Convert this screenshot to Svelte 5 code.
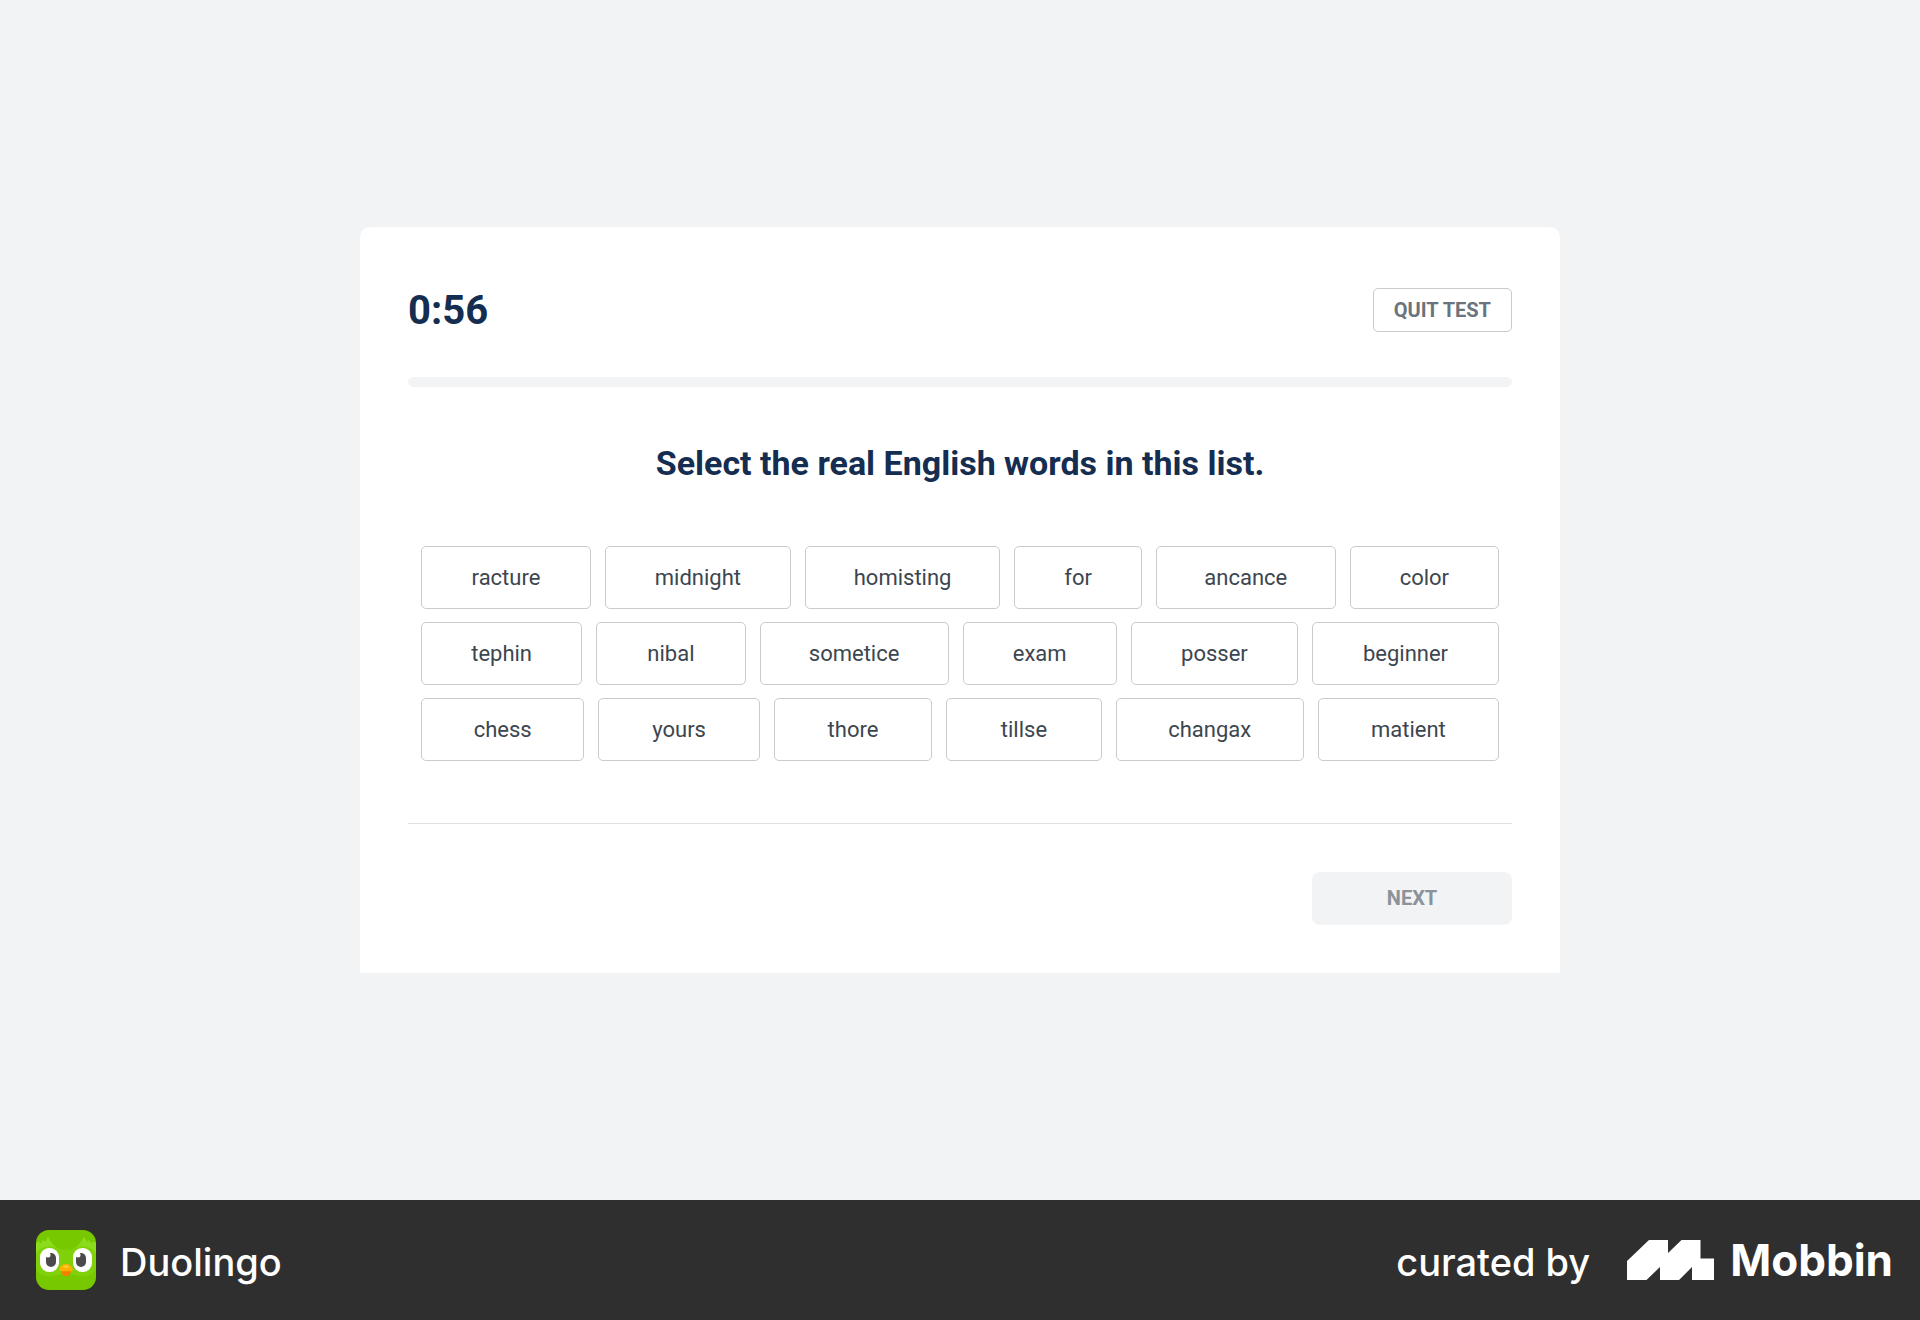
<script>
  // `size` is each tile's share of its row.
  const rows = [
    [
      { word: 'racture', size: 170 },
      { word: 'midnight', size: 186 },
      { word: 'homisting', size: 196 },
      { word: 'for', size: 127 },
      { word: 'ancance', size: 180 },
      { word: 'color', size: 149 }
    ],
    [
      { word: 'tephin', size: 161 },
      { word: 'nibal', size: 149 },
      { word: 'sometice', size: 189 },
      { word: 'exam', size: 154 },
      { word: 'posser', size: 167 },
      { word: 'beginner', size: 187 }
    ],
    [
      { word: 'chess', size: 163 },
      { word: 'yours', size: 161 },
      { word: 'thore', size: 158 },
      { word: 'tillse', size: 155 },
      { word: 'changax', size: 188 },
      { word: 'matient', size: 181 }
    ]
  ];

  let selected = $state([]);

  function toggle(word) {
    selected = selected.includes(word)
      ? selected.filter((w) => w !== word)
      : [...selected, word];
  }
</script>

<div class="page">
  <main>
    <section class="card">
      <header>
        <div class="timer" role="timer">0:56</div>
        <button class="quit" type="button">QUIT TEST</button>
      </header>
      <div class="track"></div>
      <h1>Select the real English words in this list.</h1>
      <div class="words">
        {#each rows as row}
          <div class="row">
            {#each row as item}
              <button
                type="button"
                class="word"
                class:on={selected.includes(item.word)}
                aria-pressed={selected.includes(item.word)}
                style:flex-grow={item.size}
                onclick={() => toggle(item.word)}>{item.word}</button>
            {/each}
          </div>
        {/each}
      </div>
      <div class="actions">
        <button class="next" type="button" disabled={selected.length === 0}>NEXT</button>
      </div>
    </section>
  </main>

  <footer>
    <div class="app">
      <svg class="owl" viewBox="0 0 60 60" aria-hidden="true">
        <defs>
          <clipPath id="tile"><rect width="60" height="60" rx="13" /></clipPath>
        </defs>
        <g clip-path="url(#tile)">
          <rect width="60" height="60" fill="#78c800" />
          <path d="M0 13 L3 11 L4 14 L7 10 L9 12 L12 7 C16 13 20 20 30 20 C40 20 43 13 48 7 L51 12 L53 10 L56 14 L57 11 L60 13 V38 C57 46 50 47 43 46 C38 45 35 44 30 44 C25 44 22 45 17 46 C10 47 3 46 0 38 Z" fill="#80d10a" />
          <path d="M0 13 L3 11 L4 14 L7 10 L9 12 L12 7 C15 12 17 16 21 18 C12 15 4 17 0 23 Z M60 13 L57 11 L56 14 L53 10 L51 12 L48 7 C45 12 43 16 39 18 C48 15 56 17 60 23 Z" fill="#8bdc1c" />
          <rect x="4" y="18" width="19" height="24" rx="9" fill="#fff" />
          <rect x="37" y="18" width="19" height="24" rx="9" fill="#fff" />
          <rect x="10" y="23" width="10" height="14" rx="5" fill="#4b4b4b" />
          <rect x="40" y="23" width="10" height="14" rx="5" fill="#4b4b4b" />
          <circle cx="12" cy="25" r="2.5" fill="#fff" />
          <circle cx="42" cy="25" r="2.5" fill="#fff" />
          <path d="M25 40 H35 C35 44 33 46 30 46 C27 46 25 44 25 40 Z" fill="#f47f00" />
          <path d="M23 40 C24 36 27 34 30 34 C33 34 36 36 37 40 C35 42 33 41 30 41 C27 41 25 42 23 40 Z" fill="#ffb100" />
          <path d="M27 37 C28 35 32 35 33 37 C32 38 28 38 27 37 Z" fill="#ffd133" />
        </g>
      </svg>
      <span class="name">Duolingo</span>
    </div>
    <div class="credit">
      <span class="by">curated by</span>
      <svg class="mark" viewBox="0 0 87 40" aria-hidden="true">
        <path d="M0 21 L22 0 H41 V13 L54.5 0 H73.5 V18.5 H87 V40 H65 V27 L52 40 H33 V27 L19.5 40 H0 Z" fill="#fff" />
      </svg>
      <span class="brand">Mobbin</span>
    </div>
  </footer>
</div>

<style>
  :global(body) {
    background: #f1f3f5;
  }
  .page {
    min-height: 100vh;
    display: flex;
    flex-direction: column;
    font-family: Roboto, 'Liberation Sans', sans-serif;
  }
  main {
    flex: 1;
    display: flex;
    align-items: center;
    justify-content: center;
  }
  .card {
    box-sizing: border-box;
    width: 100%;
    max-width: 1200px;
    padding: 61px 48px 48px;
    background: #fff;
    border-radius: 10px 10px 0 0;
  }
  button {
    font-family: inherit;
    cursor: pointer;
  }
  header {
    display: flex;
    align-items: center;
    justify-content: space-between;
  }
  .timer {
    padding-top: 2px;
    font-size: 40px;
    line-height: 42px;
    font-weight: 700;
    color: #142d50;
  }
  .quit {
    padding: 0 20px;
    font-size: 20px;
    line-height: 42px;
    font-weight: 700;
    color: #6b737c;
    background: #fff;
    border: 1px solid #c8cccf;
    border-radius: 5px;
  }
  .track {
    height: 10px;
    margin-top: 45px;
    border-radius: 5px;
    background: #f1f3f4;
  }
  h1 {
    margin: 56px 0 63px;
    font-size: 34px;
    line-height: 40px;
    font-weight: 700;
    text-align: center;
    color: #142d50;
  }
  .words {
    display: flex;
    flex-direction: column;
    gap: 13px;
    padding: 0 13px;
  }
  .row {
    display: flex;
    gap: 14px;
  }
  .word {
    flex: 1 1 0;
    padding: 0;
    font-size: 22px;
    line-height: 61px;
    color: #3c464f;
    background: #fff;
    border: 1px solid #c8cccd;
    border-radius: 5px;
  }
  .word.on {
    border-color: #1cb0f6;
    background: #ddf4ff;
  }
  .actions {
    display: flex;
    justify-content: flex-end;
    margin-top: 62px;
    padding-top: 48px;
    border-top: 1px solid #dfe2e3;
  }
  .next {
    width: 200px;
    padding: 0;
    font-size: 20px;
    line-height: 53px;
    font-weight: 700;
    color: #8b929a;
    background: #f1f3f5;
    border: 0;
    border-radius: 8px;
  }
  footer {
    box-sizing: border-box;
    height: 120px;
    padding: 0 27px 0 36px;
    display: flex;
    align-items: center;
    justify-content: space-between;
    background: #2f2f2f;
    color: #fff;
    font-family: Inter, 'Liberation Sans', sans-serif;
  }
  .app,
  .credit {
    display: flex;
    align-items: center;
  }
  .owl {
    width: 60px;
    height: 60px;
    margin-right: 24px;
  }
  .name,
  .by {
    padding-top: 4px;
    font-size: 38px;
    line-height: 48px;
    font-weight: 500;
  }
  .mark {
    width: 87px;
    height: 40px;
    margin: 0 16px 0 37px;
  }
  .brand {
    font-size: 44px;
    line-height: 48px;
    font-weight: 700;
  }
</style>
